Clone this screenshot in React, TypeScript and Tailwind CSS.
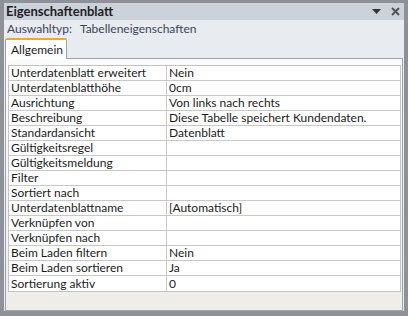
import React from 'react';

const rows: [string, string][] = [
  ['Unterdatenblatt erweitert', 'Nein'],
  ['Unterdatenblatthöhe', '0cm'],
  ['Ausrichtung', 'Von links nach rechts'],
  ['Beschreibung', 'Diese Tabelle speichert Kundendaten.'],
  ['Standardansicht', 'Datenblatt'],
  ['Gültigkeitsregel', ''],
  ['Gültigkeitsmeldung', ''],
  ['Filter', ''],
  ['Sortiert nach', ''],
  ['Unterdatenblattname', '[Automatisch]'],
  ['Verknüpfen von', ''],
  ['Verknüpfen nach', ''],
  ['Beim Laden filtern', 'Nein'],
  ['Beim Laden sortieren', 'Ja'],
  ['Sortierung aktiv', '0'],
];

export default function App() {
  return (
    <div
      className="w-[408px] h-[316px] bg-[#8e9298] pt-[3px] pl-[4px] pr-[4px] pb-[5px] flex flex-col text-[12px] text-[#1b1b1b]"
      style={{ fontFamily: 'Lato, "Noto Sans", sans-serif' }}
    >
      {/* Title bar */}
      <div className="h-[17px] bg-[#cbd2da] flex items-center pl-[2px] pr-[4px]">
        <span className="font-bold text-[13px] leading-[15px] text-[#1e1e1e]">Eigenschaftenblatt</span>
        <div className="ml-auto flex items-center gap-[10px]">
          <svg width="9" height="6" viewBox="0 0 9 6">
            <path d="M0 0 H9 L4.5 5 Z" fill="#333" />
          </svg>
          <svg width="9" height="9" viewBox="0 0 9 9">
            <path d="M1 1 L8 8 M8 1 L1 8" stroke="#555" strokeWidth="2" />
          </svg>
        </div>
      </div>

      <div className="flex-1 bg-[#e8ebf0] flex flex-col">
        {/* Selection type */}
        <div className="h-[18px] flex items-center pl-[3px] text-[#3a4656] leading-[14px]">
          <span>Auswahltyp:</span>
          <span className="ml-[8px]">Tabelleneigenschaften</span>
        </div>

        {/* Tab */}
        <div className="h-[20px] flex items-end pl-[1px]">
          <div className="h-[21px] w-[62px] -mb-[1px] bg-white border border-[#9da3aa] border-b-0 border-t-2 border-t-[#f0a43a] rounded-t-[2px] pl-[5px] flex items-center relative z-10">
            <span className="leading-[14px]">Allgemein</span>
          </div>
        </div>

        {/* Panel */}
        <div className="flex-1 ml-[1px] mr-[1px] border border-[#9da3aa] bg-gradient-to-b from-[#fbfbfc] to-[#eeede8] pt-[6px] pl-[2px] pr-[1px]">
          <div className="border border-[#c3c3c3] bg-white">
            {rows.map(([k, v], i) => (
              <div
                key={k}
                className={`flex h-[15px] ${i < rows.length - 1 ? 'border-b border-[#c8c8c8]' : ''}`}
              >
                <div className="w-[158px] border-r border-[#c8c8c8] pl-[2px] flex items-center leading-[14px] whitespace-nowrap">
                  {k}
                </div>
                <div className="flex-1 pl-[2px] flex items-center leading-[14px] whitespace-nowrap">{v}</div>
              </div>
            ))}
          </div>
        </div>
      </div>
    </div>
  );
}
